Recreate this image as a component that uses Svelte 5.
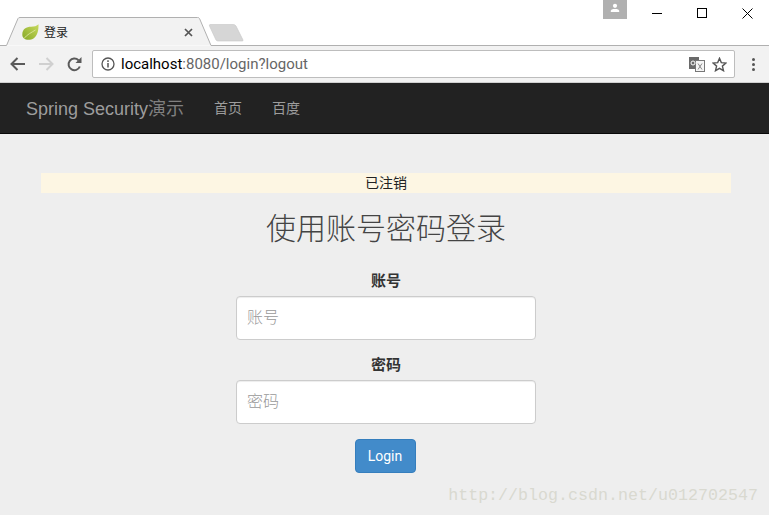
<script>
  const nav = ['首页', '百度'];
</script>

<div class="page">
  <header class="chrome">
    <div class="strip">
      <svg class="tabshape" width="250" height="46" viewBox="0 0 250 46">
        <path d="M0 45.5H6.5L18 18.5Q18.500 17.500 20 17.500H197.500Q199 17.500 199.500 18.500L211 45.500H250" fill="#f2f2f2" stroke="#b0b0b0"/>
        <path d="M210 24.500H233.500Q235 24.500 236 26L243 40Q243.500 41 242 41H218Q216.500 41 216 40L209.500 26Q209 24.500 210 24.500Z" fill="#d6d6d6" stroke="#c6c6c6" stroke-width=".6"/>
      </svg>
      <div class="tab">
        <svg class="leaf" width="17" height="16" viewBox="0 0 17 16">
          <defs>
            <linearGradient id="leafg" x1="1" y1="0" x2="0" y2="1">
              <stop offset="0" stop-color="#c8da5e"/>
              <stop offset="1" stop-color="#86a826"/>
            </linearGradient>
          </defs>
          <path d="M16.500 .3C16.800 8 14.500 15 8 15.800C3 16.300 .3 14 .3 10.500C.3 5 4.500 2.800 9 2.800C12 2.800 15 2 16.500 .3Z" fill="url(#leafg)"/>
          <path d="M2 14.500C5 10.500 9.500 8.500 13.500 6" fill="none" stroke="#e2eaa8" stroke-width=".8"/>
        </svg>
        <span class="tabtitle">登录</span>
        <svg class="tabclose" width="9" height="9" viewBox="0 0 9 9"><path d="M1 1 8 8M8 1 1 8" stroke="#555" stroke-width="1.700"/></svg>
      </div>
      <div class="winctl">
        <div class="avatar">
          <svg width="10" height="10" viewBox="0 0 10 10"><circle cx="5" cy="2.800" r="2.100" fill="#fff"/><path d="M.8 9V7.800Q.8 6.500 3.200 6H6.800Q9.200 6.500 9.200 7.800V9Z" fill="#fff"/></svg>
        </div>
        <svg class="min" width="10" height="10" viewBox="0 0 10 10"><path d="M0 5.500H10" stroke="#000"/></svg>
        <svg class="max" width="10" height="10" viewBox="0 0 10 10"><rect x=".5" y=".5" width="9" height="9" fill="none" stroke="#000"/></svg>
        <svg class="close" width="11" height="11" viewBox="0 0 11 11"><path d="M.5 .5 10.500 10.500M10.500 .5 .5 10.500" stroke="#000"/></svg>
      </div>
    </div>
    <div class="toolbar">
      <svg class="tool" width="16" height="14" viewBox="0 0 16 14"><path d="M15 7H2M7.500 1 1.500 7l6 6" fill="none" stroke="#5a5a5a" stroke-width="2"/></svg>
      <svg class="tool" width="16" height="14" viewBox="0 0 16 14"><path d="M1 7H14M8.500 1l6 6-6 6" fill="none" stroke="#d0d0d0" stroke-width="2"/></svg>
      <svg class="tool" width="15" height="15" viewBox="0 0 15 15"><path d="M12.800 9.500A5.800 5.800 0 1 1 11.500 3.300" fill="none" stroke="#5a5a5a" stroke-width="2"/><path d="M8.500 6H14.500V0Z" fill="#5a5a5a"/></svg>
      <div class="omnibox">
        <svg class="info" width="14" height="14" viewBox="0 0 14 14"><circle cx="7" cy="7" r="6" fill="none" stroke="#555" stroke-width="1.300"/><path d="M7 6V10.500M7 3.300V5" stroke="#555" stroke-width="1.500"/></svg>
        <span class="url"><span class="host">localhost</span>:8080/login?logout</span>
        <svg class="translate" width="16" height="15" viewBox="0 0 16 15"><rect x="0" y="0" width="10" height="12" fill="#6a6a6a"/><rect x="6.500" y="3.500" width="9" height="11" fill="#f5f5f5" stroke="#777"/><circle cx="4" cy="6" r="2" fill="none" stroke="#fff"/><path d="M9 6.500l4 6M13 6.500l-4 6" stroke="#888"/></svg>
        <svg class="star" width="15" height="15" viewBox="0 0 15 15"><path d="M7.500 1.300 9.300 5.600 14 6 10.400 9.100 11.500 13.700 7.500 11.300 3.500 13.700 4.600 9.100 1 6 5.700 5.600Z" fill="none" stroke="#555" stroke-width="1.400"/></svg>
      </div>
      <div class="dots"><i></i><i></i><i></i></div>
    </div>
  </header>

  <nav class="navbar">
    <span class="brand">Spring Security<span class="thin">演示</span></span>
    {#each nav as item}
      <span class="navlink">{item}</span>
    {/each}
  </nav>

  <main class="content">
    <div class="alert">已注销</div>
    <h2>使用账号密码登录</h2>
    <form class="form" onsubmit={(e) => e.preventDefault()}>
      <label class="field">
        <span>账号</span>
        <input type="text" placeholder="账号" />
      </label>
      <label class="field">
        <span>密码</span>
        <input type="password" placeholder="密码" />
      </label>
      <button type="submit">Login</button>
    </form>
    <div class="watermark">http://blog.csdn.net/u012702547</div>
  </main>
</div>

<style>
  :global(body) {
    margin: 0;
    background: #eee;
  }
  .page {
    width: 769px;
    height: 515px;
    overflow: hidden;
    display: flex;
    flex-direction: column;
    font-family: "Liberation Sans", "Noto Sans CJK SC", sans-serif;
    color: #333;
  }
  .chrome {
    background: #fff;
  }
  .strip {
    height: 46px;
    position: relative;
  }
  .tabshape {
    position: absolute;
    left: 0;
    top: 0;
  }
  .strip::after {
    content: "";
    position: absolute;
    left: 250px;
    right: 0;
    bottom: 0;
    height: 1px;
    background: #b0b0b0;
  }
  .tab {
    position: absolute;
    left: 22px;
    top: 23px;
    width: 172px;
    height: 17px;
    display: flex;
    align-items: center;
  }
  .leaf {
    margin-right: 5px;
  }
  .tabtitle {
    font-size: 12px;
    color: #222;
    flex: 1;
  }
  .tabclose {
    margin-right: 1px;
    margin-top: 2px;
  }
  .winctl {
    position: absolute;
    top: 0;
    right: 0;
    height: 19px;
  }
  .avatar {
    position: absolute;
    left: -166px;
    top: 0;
    width: 24px;
    height: 19px;
    background: #b0b0b0;
    display: flex;
    justify-content: center;
    align-items: flex-start;
    padding-top: 3px;
    box-sizing: border-box;
  }
  .min, .max, .close {
    position: absolute;
    top: 8px;
  }
  .min { right: 107px; }
  .max { right: 62px; }
  .close { right: 16px; }
  .toolbar {
    height: 36px;
    background: #f2f2f2;
    border-bottom: 1px solid #d0d0d0;
    display: flex;
    align-items: center;
    padding-left: 10px;
    position: relative;
  }
  .tool {
    margin-right: 12px;
    flex: none;
  }
  .tool:nth-child(3) {
    margin-right: 10px;
    margin-left: 1px;
  }
  .omnibox {
    width: 626px;
    height: 26px;
    background: #fff;
    border: 1px solid #bdbdbd;
    border-radius: 2px;
    display: flex;
    align-items: center;
    padding: 0 7px 0 8px;
  }
  .info {
    margin-right: 6px;
    flex: none;
  }
  .url {
    flex: 1;
    font-family: "Roboto", "Liberation Sans", sans-serif;
    font-size: 15px;
    color: #666;
    white-space: nowrap;
  }
  .host {
    color: #000;
  }
  .translate {
    margin-right: 7px;
  }
  .dots {
    margin-left: 17px;
    display: flex;
    flex-direction: column;
    gap: 2px;
  }
  .dots i {
    display: block;
    width: 3px;
    height: 3px;
    border-radius: 50%;
    background: #555;
  }
  .navbar {
    height: 51px;
    background: #222;
    border-bottom: 1px solid #080808;
    display: flex;
    align-items: center;
    padding: 0 0 2px 26px;
    box-sizing: border-box;
    flex: none;
  }
  .brand {
    font-size: 18px;
    color: #9d9d9d;
    margin-right: 15px;
  }
  .thin {
    color: #808080;
  }
  .navlink {
    font-size: 14px;
    color: #9d9d9d;
    padding: 0 15px;
  }
  .content {
    flex: 1;
    background: #eee;
    position: relative;
    padding: 39px 38px 0 41px;
  }
  .alert {
    height: 20px;
    line-height: 20px;
    background: #fdf6e3;
    font-size: 14px;
    text-align: center;
    color: #222;
  }
  h2 {
    margin: 14px 0 0;
    font-size: 30px;
    font-weight: 300;
    line-height: 44px;
    text-align: center;
    color: #444;
  }
  .form {
    margin-top: 20px;
    display: flex;
    flex-direction: column;
    align-items: center;
  }
  .field {
    display: flex;
    flex-direction: column;
    align-items: center;
    margin-bottom: 15px;
    width: 300px;
  }
  .field span {
    font-size: 15px;
    font-weight: 700;
    line-height: 20px;
    margin-bottom: 5px;
    color: #333;
  }
  input {
    width: 100%;
    height: 44px;
    box-sizing: border-box;
    border: 1px solid #ccc;
    border-radius: 4px;
    background: #fff;
    padding: 0 10px;
    font-size: 16px;
    font-weight: 300;
    font-family: inherit;
    box-shadow: inset 0 1px 1px rgba(0,0,0,.075);
  }
  input::placeholder {
    color: #999;
    opacity: 1;
  }
  button {
    width: 61px;
    height: 34px;
    margin-right: 2px;
    background: #428bca;
    border: 1px solid #357ebd;
    border-radius: 4px;
    color: #fff;
    font-size: 14px;
    font-family: "Roboto", "Liberation Sans", sans-serif;
    padding: 0;
  }
  .watermark {
    position: absolute;
    right: 11px;
    bottom: 9px;
    font-family: "Liberation Mono", monospace;
    font-size: 16.670px;
    color: #d9d9d0;
    white-space: nowrap;
    line-height: 20px;
  }
</style>
